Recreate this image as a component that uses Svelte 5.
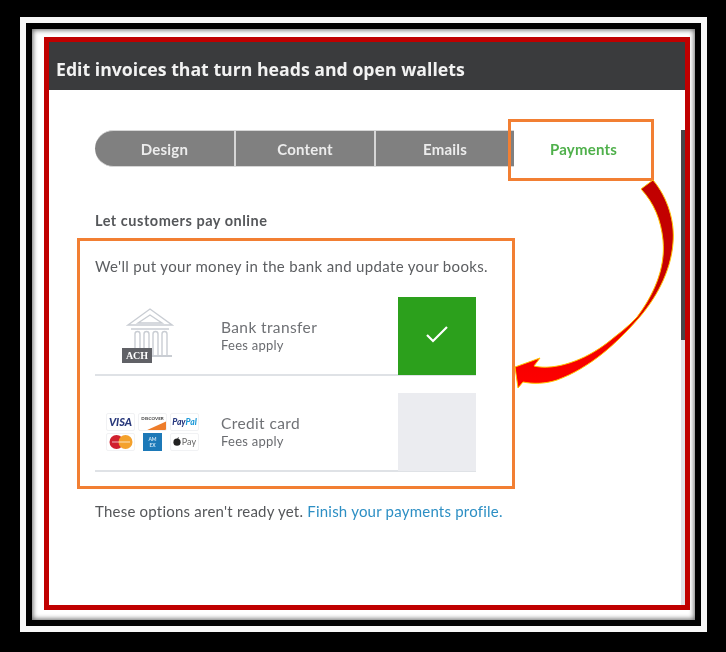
<script>
	const tabs = ['Design', 'Content', 'Emails', 'Payments'];
	const active = 'Payments';
</script>

<div class="mat">
	<div class="black">
		<div class="bevel">
			<div class="red">
				<main class="panel">
					<header>Edit invoices that turn heads and open wallets</header>
					<div class="scroll"></div>
					<div class="content">
						<nav class="tabs">
							{#each tabs as tab}
								<div class="tab" class:active={tab === active}>{tab}</div>
							{/each}
						</nav>

						<h2>Let customers pay online</h2>
						<p class="lead">We'll put your money in the bank and update your books.</p>

						<div class="option first">
							<div class="art">
								<div class="bank">
									<svg width="48" height="56" viewBox="0 0 48 56" fill="none" stroke="#c9cdd3" stroke-width="1.4">
										<path d="M2 17 24 1l22 16z" />
										<path d="M12 15 24 7l12 8z" />
										<path d="M5 21h38" />
										<path d="M9 47V26a2.500 2.500 0 0 1 5 0v21M18 47V26a2.500 2.500 0 0 1 5 0v21M27 47V26a2.500 2.500 0 0 1 5 0v21M36 47V26a2.500 2.500 0 0 1 5 0v21" />
										<path d="M26 48h20" stroke-width="2" />
									</svg>
									<span class="ach">ACH</span>
								</div>
							</div>
							<div class="label">
								<div class="name">Bank transfer</div>
								<div class="fees">Fees apply</div>
							</div>
							<div class="toggle on">
								<svg class="check" width="22" height="18" viewBox="0 0 22 18" fill="none" stroke="#fff" stroke-width="2.200">
									<path d="M1 10 7 16 21 2" />
								</svg>
							</div>
						</div>

						<div class="option">
							<div class="art">
								<div class="cards">
									<div class="card"><b class="visa">VISA</b></div>
									<div class="card disc"><span>DISCOVER</span><svg viewBox="0 0 29 18"><path d="M7 18 29 8v10z" fill="#ee7d2b" /></svg></div>
									<div class="card"><b class="paypal">Pay<i>Pal</i></b></div>
									<div class="card">
										<svg width="24" height="14" viewBox="0 0 24 14">
											<circle cx="7.500" cy="7" r="7" fill="#d0202e" />
											<circle cx="16.500" cy="7" r="7" fill="#f4a12c" />
											<path d="M3 6h18v2H3z" fill="#fff" opacity=".35" />
										</svg>
									</div>
									<div class="card amex"><span>AM<br />EX</span></div>
									<div class="card">
										<svg width="8" height="9" viewBox="0 0 8 9"><ellipse cx="4" cy="5.200" rx="3.600" ry="3.600" fill="#222" /><path d="M4 2Q4.500.400 6 .2 6 1.800 4 2" fill="#222" /></svg>
										<span class="apple">Pay</span>
									</div>
								</div>
							</div>
							<div class="label">
								<div class="name">Credit card</div>
								<div class="fees">Fees apply</div>
							</div>
							<div class="toggle"></div>
						</div>

						<p class="foot">These options aren't ready yet. <a href="#profile">Finish your payments profile.</a></p>
					</div>
				</main>
			</div>
		</div>
	</div>
</div>

<!-- annotations drawn over the screenshot -->
<svg class="marks" width="726" height="652" viewBox="0 0 726 652" fill="none">
	<defs>
		<linearGradient id="sweep" x1="0" y1="0" x2="0" y2="1">
			<stop offset="0" stop-color="#c00000" />
			<stop offset="0.5" stop-color="#c80000" />
			<stop offset="0.75" stop-color="#f00000" />
			<stop offset="1" stop-color="#ff0000" />
		</linearGradient>
	</defs>
	<rect x="509.500" y="120.500" width="143" height="59" stroke="#f27f33" stroke-width="3" />
	<rect x="78.500" y="239.500" width="435" height="248" stroke="#f27f33" stroke-width="3" />
	<path
		d="M641 189 653 180C668 198 675 222 673 243 671 272 655 300 638 319 617 343 590 368 557 380 545 384 533 384 523 382L518 388 515 367 540 358 534 366C555 371 585 360 607 343 618 334 628 327 637 317 652 297 666 270 663 240 661 220 654 203 641 189Z"
		fill="url(#sweep)"
		stroke="#ffc400"
		stroke-width="1"
	/>
</svg>

<style>
	:global(body) {
		margin: 0;
		background: #000;
	}

	.mat {
		box-sizing: border-box;
		width: 687px;
		height: 615px;
		margin: 17px 0 0 20px;
		border: 6px solid #f7f7f7;
		background: #000;
		font-family: 'Lato', 'Liberation Sans', sans-serif;
		filter: blur(0.5px);
	}

	.black {
		box-sizing: border-box;
		height: 100%;
		padding: 6px;
		background: #000;
	}

	.bevel {
		box-sizing: border-box;
		height: 100%;
		padding: 8px 5px 10px 12px;
		background: #fff;
		box-shadow: inset 0 0 5px 1px #666;
	}

	.red {
		box-sizing: border-box;
		height: 100%;
		border: 5px solid #c00000;
	}

	.panel {
		position: relative;
		height: 100%;
		background: #fff;
	}

	header {
		box-sizing: border-box;
		height: 48px;
		padding: 15px 0 0 7px;
		background: #3a3b3d;
		color: #f2f2f2;
		font-family: 'Open Sans', sans-serif;
		font-size: 17.700px;
		font-weight: 700;
		line-height: 24px;
	}

	.scroll {
		position: absolute;
		top: 88px;
		right: 0;
		bottom: 0;
		width: 4px;
		background: linear-gradient(#46464a 210px, #e2e2e8 210px);
	}

	.content {
		padding: 40px 0 0 46px;
	}

	.tabs {
		display: flex;
		width: 558px;
		height: 37px;
	}

	.tab {
		box-sizing: border-box;
		display: flex;
		align-items: center;
		justify-content: center;
		background: #808080;
		border: solid #d6d6d6;
		border-width: 1px 2px 1px 0;
		color: #ececec;
		font-size: 15px;
		font-weight: 700;
		letter-spacing: 0.2px;
	}

	.tab:nth-child(1) {
		flex: 0 0 141px;
		border-radius: 19px 0 0 19px;
	}

	.tab:nth-child(2) {
		flex: 0 0 140px;
	}

	.tab:nth-child(3) {
		flex: 0 0 138px;
		border-right: 0;
	}

	.tab.active {
		flex: 0 0 139px;
		background: #fff;
		border: 0;
		color: #4fb04b;
	}

	h2 {
		margin: 46px 0 0;
		color: #55575a;
		font-size: 14.500px;
		font-weight: 700;
		line-height: 16px;
		letter-spacing: 0.52px;
	}

	.lead {
		margin: 29px 0 0;
		color: #5c5e61;
		font-size: 15px;
		line-height: 16px;
		letter-spacing: 0.34px;
	}

	.option {
		display: flex;
		box-sizing: border-box;
		width: 381px;
		height: 79px;
		margin-top: 17px;
		border-bottom: 2px solid #dfe2e6;
	}

	.option.first {
		margin-top: 23px;
	}

	.art {
		flex: 0 0 126px;
		display: flex;
		align-items: center;
	}

	.bank {
		position: relative;
		width: 48px;
		height: 56px;
		margin-left: 31px;
	}

	.ach {
		position: absolute;
		left: -4px;
		bottom: 1px;
		width: 30px;
		height: 15px;
		background: #606166;
		color: #fff;
		font-family: 'Liberation Serif', serif;
		font-size: 10px;
		font-weight: 700;
		line-height: 15px;
		text-align: center;
	}

	.cards {
		display: grid;
		grid-template-columns: repeat(3, 29px);
		grid-auto-rows: 18px;
		gap: 2px 3px;
		margin-left: 11px;
	}

	.card {
		position: relative;
		display: flex;
		align-items: center;
		justify-content: center;
		gap: 1px;
		overflow: hidden;
		box-sizing: border-box;
		border: 1px solid #f1f2f4;
		border-radius: 2px;
		background: #fff;
	}

	.visa {
		color: #2a3a7c;
		font-size: 11px;
		font-style: italic;
		font-weight: 900;
	}

	.paypal {
		color: #28397f;
		font-size: 8.500px;
		font-style: italic;
		font-weight: 900;
	}

	.paypal i {
		color: #1f9ad8;
	}

	.disc span {
		position: absolute;
		top: 2px;
		color: #3a3a3a;
		font-size: 4.500px;
		font-weight: 700;
	}

	.disc svg {
		position: absolute;
		inset: 0;
	}

	.amex {
		width: 19px;
		margin-left: 5px;
		border: 0;
		border-radius: 0;
		background: #1c79b8;
		color: #cfe6f5;
		font-size: 5px;
		font-weight: 700;
		line-height: 6px;
		text-align: center;
	}

	.apple {
		color: #666;
		font-size: 9px;
	}

	.label {
		flex: 1;
		padding-top: 21px;
	}

	.name {
		color: #6f7175;
		font-size: 15.500px;
		line-height: 18px;
		letter-spacing: 0.38px;
	}

	.fees {
		color: #6a6c70;
		font-size: 13px;
		line-height: 19px;
		letter-spacing: 0.25px;
	}

	.toggle {
		flex: 0 0 78px;
		height: 78px;
		display: flex;
		align-items: center;
		justify-content: center;
		background: #ebecf0;
	}

	.toggle.on {
		background: #2ca01c;
	}

	.check {
		margin-bottom: 5px;
	}

	.foot {
		margin: 30px 0 0;
		color: #55575a;
		font-size: 15px;
		line-height: 18px;
		letter-spacing: 0.22px;
	}

	.foot a {
		color: #2d8fc4;
		text-decoration: none;
	}

	.marks {
		position: absolute;
		top: 0;
		left: 0;
	}
</style>
